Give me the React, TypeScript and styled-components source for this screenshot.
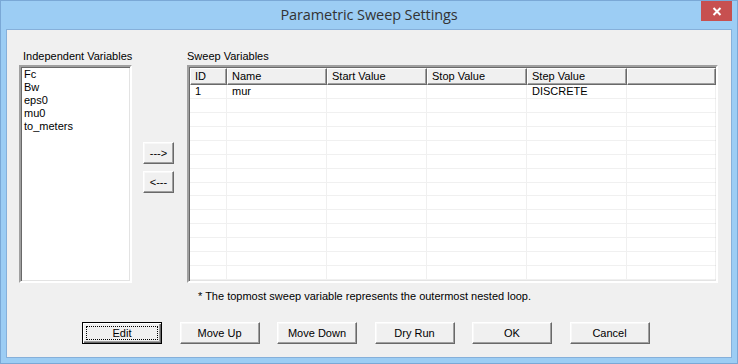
import React from "react";
import styled, { createGlobalStyle, css } from "styled-components";

const Global = createGlobalStyle`
  html, body { margin: 0; padding: 0; background: #ffffff; }
  * { box-sizing: border-box; }
`;

const Window = styled.div`
  width: 738px;
  height: 364px;
  background: #9ccdf4;
  border: 1px solid #7aa8d6;
  display: flex;
  flex-direction: column;
  font-family: "Liberation Sans", Arial, sans-serif;
  font-size: 11px;
  color: #000;
`;

const TitleBar = styled.div`
  height: 28px;
  display: grid;
  grid-template-columns: 1fr auto 1fr;
  align-items: start;
`;

const Title = styled.div`
  grid-column: 2;
  font-family: "Open Sans", "Noto Sans", sans-serif;
  font-size: 14.5px;
  color: #333;
  line-height: 28px;
  letter-spacing: -0.1px;
`;

const CloseButton = styled.div`
  grid-column: 3;
  justify-self: end;
  margin-right: 5px;
  width: 31px;
  height: 20px;
  background: #c75050;
  display: flex;
  align-items: center;
  justify-content: center;
`;

const Client = styled.div`
  flex: 1;
  margin: 0 5px 5px 5px;
  background: #f0f0f0;
  border: 1px solid #86b0da;
  display: flex;
  flex-direction: column;
  padding-top: 20px;
`;

const MainRow = styled.div`
  display: flex;
  align-items: flex-start;
  padding-left: 12px;
`;

const Column = styled.div<{ $width: number }>`
  width: ${(p) => p.$width}px;
  display: flex;
  flex-direction: column;
`;

const Label = styled.div<{ $indent?: number }>`
  height: 13px;
  line-height: 13px;
  margin-bottom: 2px;
  padding-left: ${(p) => p.$indent ?? 0}px;
  white-space: nowrap;
`;

const sunken = css`
  border-style: solid;
  border-width: 2px;
  border-color: #696969 #ffffff #ffffff #696969;
  box-shadow: inset 1px 1px 0 #a0a0a0, inset -1px -1px 0 #e3e3e3;
`;

const ListBox = styled.div`
  ${sunken};
  border-color: #a0a0a0 #ffffff #ffffff #a0a0a0;
  box-shadow: inset 1px 1px 0 #696969, inset -1px -1px 0 #e3e3e3;
  height: 218px;
  background: #ffffff;
  display: flex;
  flex-direction: column;
  padding: 1px 0 0 1px;
`;

const ListItem = styled.div`
  height: 13px;
  line-height: 13px;
  padding-left: 2px;
  white-space: nowrap;
`;

const ArrowColumn = styled.div`
  display: flex;
  flex-direction: column;
  gap: 7px;
  margin: 92px 13px 0 11px;
`;

const Button = styled.button<{ $w: number; $default?: boolean }>`
  width: ${(p) => p.$w}px;
  height: 22px;
  padding: 0;
  margin: 0;
  font-family: "Liberation Sans", Arial, sans-serif;
  font-size: 11px;
  color: #000;
  background: #f0f0f0;
  border-style: solid;
  border-width: 1px;
  border-color: #ffffff #696969 #696969 #ffffff;
  box-shadow: inset -1px -1px 0 #a0a0a0, inset 1px 1px 0 #f8f8f8;
  position: relative;
  display: flex;
  align-items: center;
  justify-content: center;
  ${(p) =>
    p.$default &&
    css`
      border-color: #000;
      box-shadow: inset 1px 1px 0 #ffffff, inset -1px -1px 0 #696969,
        inset -2px -2px 0 #a0a0a0;
      &::after {
        content: "";
        position: absolute;
        inset: 3px;
        border: 1px dotted #000;
      }
    `}
`;

const Table = styled.div`
  ${sunken};
  border-color: #a0a0a0 #ffffff #ffffff #a0a0a0;
  box-shadow: inset 1px 1px 0 #696969, inset -1px -1px 0 #e3e3e3;
  height: 218px;
  background: #ffffff;
  display: flex;
  flex-direction: column;
  padding: 1px 1px 1px 1px;
  overflow: hidden;
`;

const cols = [37, 100, 100, 100, 100, 89];

const HeaderRow = styled.div`
  display: flex;
  height: 17px;
`;

const HeaderCell = styled.div<{ $w: number }>`
  width: ${(p) => p.$w}px;
  flex: none;
  height: 17px;
  line-height: 14px;
  padding-left: 4px;
  background: #f0f0f0;
  border-style: solid;
  border-width: 1px;
  border-color: #ffffff #696969 #696969 #ffffff;
  box-shadow: inset -1px -1px 0 #a0a0a0;
  white-space: nowrap;
  overflow: hidden;
`;

const DataRow = styled.div`
  display: flex;
  height: 14px;
  border-bottom: 1px solid #f0f0f0;
`;

const DataCell = styled.div<{ $w: number }>`
  width: ${(p) => p.$w}px;
  flex: none;
  line-height: 13px;
  padding-left: 5px;
  border-right: 1px solid #f0f0f0;
  white-space: nowrap;
`;

const Note = styled.div`
  padding-left: 191px;
  margin-top: 7px;
  height: 13px;
  line-height: 13px;
`;

const ButtonRow = styled.div`
  display: flex;
  gap: 17.5px;
  padding-left: 75px;
  margin-top: 19px;
`;

const headers = ["ID", "Name", "Start Value", "Stop Value", "Step Value", ""];
const rows: string[][] = [["1", "mur", "", "", "DISCRETE", ""]];
while (rows.length < 14) rows.push(["", "", "", "", "", ""]);

const variables = ["Fc", "Bw", "eps0", "mu0", "to_meters"];
const actions = ["Edit", "Move Up", "Move Down", "Dry Run", "OK", "Cancel"];

export default function App() {
  return (
    <>
      <Global />
      <Window>
        <TitleBar>
          <Title>Parametric Sweep Settings</Title>
          <CloseButton>
            <svg width="10" height="9" viewBox="0 0 10 9">
              <path d="M1.5 1 L8.5 8 M8.5 1 L1.5 8" stroke="#fff" strokeWidth="2" />
            </svg>
          </CloseButton>
        </TitleBar>
        <Client>
          <MainRow>
            <Column $width={113}>
              <Label $indent={4}>Independent Variables</Label>
              <ListBox>
                {variables.map((v) => (
                  <ListItem key={v}>{v}</ListItem>
                ))}
              </ListBox>
            </Column>
            <ArrowColumn>
              <Button $w={31}>---&gt;</Button>
              <Button $w={31}>&lt;---</Button>
            </ArrowColumn>
            <Column $width={531}>
              <Label>Sweep Variables</Label>
              <Table>
                <HeaderRow>
                  {headers.map((h, i) => (
                    <HeaderCell key={i} $w={cols[i]}>
                      {h}
                    </HeaderCell>
                  ))}
                </HeaderRow>
                {rows.map((r, ri) => (
                  <DataRow key={ri}>
                    {r.map((c, ci) => (
                      <DataCell key={ci} $w={cols[ci]}>
                        {c}
                      </DataCell>
                    ))}
                  </DataRow>
                ))}
              </Table>
            </Column>
          </MainRow>
          <Note>* The topmost sweep variable represents the outermost nested loop.</Note>
          <ButtonRow>
            {actions.map((a, i) => (
              <Button key={a} $w={80} $default={i === 0}>
                {a}
              </Button>
            ))}
          </ButtonRow>
        </Client>
      </Window>
    </>
  );
}
